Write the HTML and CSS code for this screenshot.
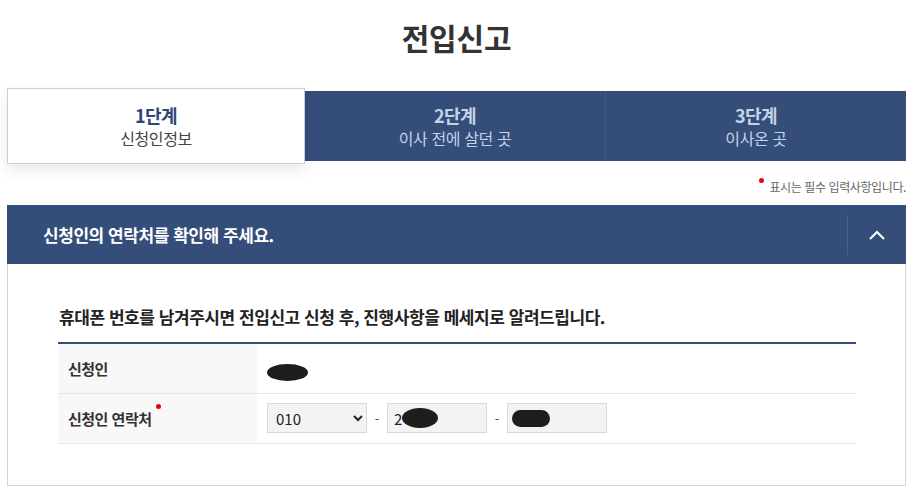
FILE: index.html
```html
<!DOCTYPE html>
<html lang="ko">
<head>
  <meta charset="UTF-8" />
  <title>전입신고</title>
  <link rel="stylesheet" href="styles.css">
</head>
<body>
  <div class="container">
    <h1 class="page-title">전입신고</h1>

    <ul class="steps">
      <li class="step active">
        <strong>1단계</strong>
        <span>신청인정보</span>
      </li>
      <li class="step">
        <strong>2단계</strong>
        <span>이사 전에 살던 곳</span>
      </li>
      <li class="step">
        <strong>3단계</strong>
        <span>이사온 곳</span>
      </li>
    </ul>

    <p class="required-note"><i class="dot"></i>표시는 필수 입력사항입니다.</p>

    <div class="panel">
      <div class="panel-head">
        <h2>신청인의 연락처를 확인해 주세요.</h2>
        <button class="toggle" type="button" aria-label="접기">
          <svg width="16" height="10" viewBox="0 0 16 10"><path d="M1 9 L8 2 L15 9" fill="none" stroke="#fff" stroke-width="2"/></svg>
        </button>
      </div>
      <div class="panel-body">
        <p class="guide">휴대폰 번호를 남겨주시면 전입신고 신청 후, 진행사항을 메세지로 알려드립니다.</p>
        <table class="form-table">
          <tr>
            <th>신청인</th>
            <td><span class="blob blob-name"></span></td>
          </tr>
          <tr>
            <th>신청인 연락처<i class="dot"></i></th>
            <td>
              <div class="phone">
                <select>
                  <option>010</option>
                </select>
                <span class="dash">-</span>
                <div class="field">2<span class="blob blob-mid"></span></div>
                <span class="dash">-</span>
                <div class="field"><span class="blob blob-last"></span></div>
              </div>
            </td>
          </tr>
        </table>
      </div>
    </div>
  </div>
</body>
</html>
```

FILE: styles.css
```css
:root {
  --navy: #344d79;
  --text: #333333;
}

* {
  margin: 0;
  padding: 0;
  box-sizing: border-box;
}

body {
  background: #ffffff;
  color: var(--text);
  font-family: "Noto Sans CJK KR", "Noto Sans", sans-serif;
  overflow: hidden;
}

.container {
  width: 899px;
  margin-left: 7px;
}

.page-title {
  text-align: center;
  font-size: 30px;
  font-weight: 700;
  line-height: 40px;
  padding-top: 17px;
  letter-spacing: -0.2px;
  color: #333;
}

.steps {
  list-style: none;
  display: flex;
  align-items: center;
  margin-top: 31px;
}

.step {
  flex: 1;
  height: 70px;
  background: var(--navy);
  display: flex;
  flex-direction: column;
  align-items: center;
  justify-content: center;
  gap: 0;
  color: #c5d2e8;
  border-left: 1px solid #3f5a88;
}

.step:nth-child(2) {
  border-left: none;
}

.step strong {
  font-size: 18px;
  font-weight: 700;
  line-height: 20px;
  letter-spacing: -0.5px;
  margin-bottom: 3px;
}

.step span {
  font-size: 16px;
  line-height: 20px;
  letter-spacing: -0.4px;
}

.step.active {
  flex: 0 0 298px;
  height: 76px;
  background: #ffffff;
  border: 1px solid #c5cfdf;
  box-shadow: 0 6px 14px rgba(0, 0, 0, 0.09);
  color: #444;
  position: relative;
  z-index: 1;
}

.step.active strong {
  color: #2f4673;
}

.required-note {
  text-align: right;
  font-size: 12px;
  color: #666;
  letter-spacing: -0.4px;
  line-height: 16px;
  margin-top: 15px;
  margin-bottom: 10px;
}

.dot {
  display: inline-block;
  width: 5px;
  height: 5px;
  border-radius: 50%;
  background: #e60012;
  vertical-align: top;
  margin-right: 5px;
  margin-top: -1px;
}

.panel-head {
  background: var(--navy);
  height: 59px;
  display: flex;
  align-items: center;
  justify-content: space-between;
  padding-left: 36px;
}

.panel-head h2 {
  color: #ffffff;
  font-size: 17px;
  font-weight: 700;
  letter-spacing: -0.45px;
}

.toggle {
  width: 59px;
  height: 40px;
  background: none;
  border: none;
  border-left: 1px solid #4a6290;
  display: flex;
  align-items: center;
  justify-content: center;
}

.panel-body {
  border: 1px solid #d6d6d6;
  border-top: none;
  height: 222px;
  padding: 41px 50px 0 50px;
}

.guide {
  font-size: 17px;
  font-weight: 700;
  color: #222;
  letter-spacing: -0.45px;
  line-height: 24px;
  padding-left: 1px;
  margin-bottom: 13px;
}

.form-table {
  width: 798px;
  border-collapse: collapse;
  border-top: 2px solid var(--navy);
}

.form-table tr {
  border-bottom: 1px solid #e6e6e6;
}

.form-table th {
  width: 199px;
  height: 50px;
  background: #f8f8f8;
  text-align: left;
  padding-left: 10px;
  font-size: 15px;
  font-weight: 700;
  letter-spacing: -0.5px;
  color: #333;
}

.form-table th .dot {
  margin-left: 4px;
  margin-top: -4px;
}

.form-table td {
  padding-left: 10px;
}

.phone {
  display: flex;
  align-items: center;
}

.phone select,
.field {
  width: 100px;
  height: 30px;
  border: 1px solid #d9d9d9;
  background: #f3f3f3;
  font-family: inherit;
  font-size: 15px;
  color: #222;
}

.phone select {
  padding-left: 4px;
}

.field {
  display: flex;
  align-items: center;
  padding-left: 6px;
}

.dash {
  width: 20px;
  text-align: center;
  font-size: 13px;
  color: #555;
}

.blob {
  display: inline-block;
  background: #1d1d1d;
  border-radius: 50%;
  vertical-align: middle;
}

.blob-name {
  width: 41px;
  height: 17px;
  margin-top: 3px;
}

.blob-mid {
  width: 36px;
  height: 20px;
}

.blob-last {
  width: 38px;
  height: 17px;
  border-radius: 9px;
  margin-left: -2px;
}
```
